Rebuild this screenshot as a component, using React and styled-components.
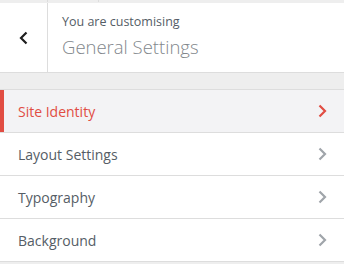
import React from "react";
import styled, { createGlobalStyle } from "styled-components";

const GlobalStyle = createGlobalStyle`
  html, body {
    margin: 0;
    padding: 0;
    background: #eeeeee;
    font-family: "Open Sans", "Noto Sans", sans-serif;
  }
`;

const sections = [
  { id: 1, label: "Site Identity", active: true },
  { id: 2, label: "Layout Settings" },
  { id: 3, label: "Typography" },
  { id: 4, label: "Background" },
];

const Chevron = ({ dir = "right", color }) => (
  <svg width="10" height="14" viewBox="0 0 10 14" fill="none">
    <path
      d={dir === "right" ? "M2.5 1.5 L8 7 L2.5 12.5" : "M7.5 1.5 L2 7 L7.5 12.5"}
      stroke={color}
      strokeWidth="2.2"
    />
  </svg>
);

const App = () => {
  return (
    <Panel>
      <GlobalStyle />
      <TopStrip>
        <StripCell w={48} />
        <StripCell w={51} />
        <StripFill />
      </TopStrip>
      <Header>
        <BackButton aria-label="Back">
          <Chevron dir="left" color="#1e1e1e" />
        </BackButton>
        <Title>
          <Eyebrow>You are customising</Eyebrow>
          <Heading>General Settings</Heading>
        </Title>
      </Header>
      <Gap />
      <List>
        {sections.map((item) => (
          <Row key={item.id} active={item.active}>
            <Label active={item.active}>{item.label}</Label>
            <Chevron color={item.active ? "#e14d43" : "#a0a5aa"} />
          </Row>
        ))}
      </List>
    </Panel>
  );
};

const Panel = styled.div`
  width: 344px;
  height: 264px;
  overflow: hidden;
  background: #eeeeee;
`;

const TopStrip = styled.div`
  display: flex;
  height: 2px;
  background: #eeeeee;
`;

const StripCell = styled.div`
  width: ${(props) => props.w}px;
  box-sizing: border-box;
  border-right: 1px solid #dddddd;
`;

const StripFill = styled.div`
  flex: 1;
`;

const Header = styled.div`
  display: flex;
  height: 70px;
  margin-top: 1px;
  background: #ffffff;
  border-bottom: 1px solid #dddddd;
  box-sizing: border-box;
`;

const BackButton = styled.button`
  width: 48px;
  box-sizing: border-box;
  padding: 0;
  border: none;
  border-right: 1px solid #dddddd;
  background: #ffffff;
  display: flex;
  align-items: center;
  justify-content: center;
  padding-top: 1px;
  cursor: pointer;
`;

const Title = styled.div`
  display: flex;
  flex-direction: column;
  justify-content: center;
  padding-left: 14px;
  padding-bottom: 1px;
`;

const Eyebrow = styled.span`
  font-size: 12.5px;
  line-height: 18px;
  color: #555d66;
`;

const Heading = styled.span`
  font-size: 18.5px;
  font-weight: 300;
  line-height: 28px;
  color: #82878c;
  margin-top: 2px;
`;

const Gap = styled.div`
  height: 16px;
`;

const List = styled.ul`
  list-style: none;
  margin: 0;
  padding: 0;
  border-top: 1px solid #dddddd;
`;

const Row = styled.li`
  height: 43px;
  box-sizing: border-box;
  display: flex;
  align-items: center;
  justify-content: space-between;
  padding: 0 17px 0 18px;
  background: ${(props) => (props.active ? "#f3f3f5" : "#ffffff")};
  border-bottom: 1px solid #dddddd;
  box-shadow: ${(props) => (props.active ? "inset 4px 0 0 #e14d43" : "none")};
  cursor: pointer;
`;

const Label = styled.span`
  font-size: 14px;
  color: ${(props) => (props.active ? "#e14d43" : "#555d66")};
`;

export default App;
